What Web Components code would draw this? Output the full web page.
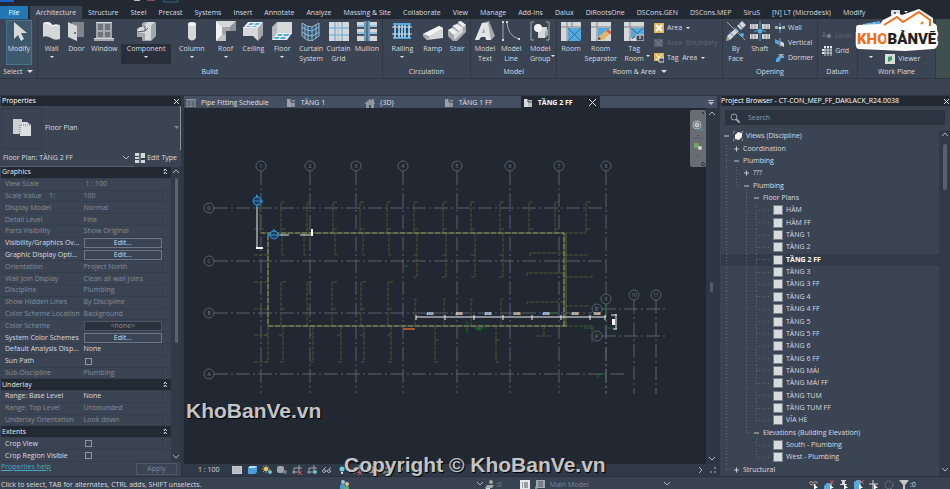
<!DOCTYPE html>
<html lang="vi">
<head>
<meta charset="utf-8">
<title>Floor Plan: TẦNG 2 FF</title>
<style>
  html, body {
    margin: 0;
    height: 100%;
    overflow: hidden;
    background: #3b4453;
  }
  body {
    --panel: #3b4453;
    --dark: #222933;
    --canvas: #212832;
    --line: #2d3542;
    --text: #d9dce1;
    --dim: #868d98;
    font: 7px/10px "Open Sans", "Noto Sans", sans-serif;
    color: var(--text);
  }
</style>
</head>
<body>

<cad-app>
  <ribbon-tabs slot="tabs"></ribbon-tabs>

  <ribbon-bar slot="ribbon">
    <ribbon-panel label="Select" more style="flex-grow: 37; --cols: 1fr">
      <ribbon-tool icon="modify" label="Modify" active></ribbon-tool>
    </ribbon-panel>
    <ribbon-panel label="Build" style="flex-grow: 347; --cols: 26fr 24fr 32fr 52fr 40fr 28fr 28fr 30fr 28fr 27fr 30fr">
      <ribbon-tool icon="wall" label="Wall" split></ribbon-tool>
      <ribbon-tool icon="door" label="Door"></ribbon-tool>
      <ribbon-tool icon="window" label="Window"></ribbon-tool>
      <ribbon-tool icon="component" label="Component" split hover></ribbon-tool>
      <ribbon-tool icon="column" label="Column" split></ribbon-tool>
      <ribbon-tool icon="roof" label="Roof" split></ribbon-tool>
      <ribbon-tool icon="ceiling" label="Ceiling"></ribbon-tool>
      <ribbon-tool icon="floor" label="Floor" split></ribbon-tool>
      <ribbon-tool icon="curtain" label="Curtain System"></ribbon-tool>
      <ribbon-tool icon="grid" label="Curtain Grid"></ribbon-tool>
      <ribbon-tool icon="mullion" label="Mullion"></ribbon-tool>
    </ribbon-panel>
    <ribbon-panel label="Circulation" style="flex-grow: 88; --cols: 38fr 24fr 26fr">
      <ribbon-tool icon="railing" label="Railing" split></ribbon-tool>
      <ribbon-tool icon="ramp" label="Ramp"></ribbon-tool>
      <ribbon-tool icon="stair" label="Stair"></ribbon-tool>
    </ribbon-panel>
    <ribbon-panel label="Model" style="flex-grow: 86; --cols: 26fr 26fr 32fr">
      <ribbon-tool icon="text" label="Model Text"></ribbon-tool>
      <ribbon-tool icon="mline" label="Model Line"></ribbon-tool>
      <ribbon-tool icon="group" label="Model Group" side></ribbon-tool>
    </ribbon-panel>
    <ribbon-panel label="Room &amp; Area" more style="flex-grow: 166; --cols: 26fr 34fr 34fr 72fr">
      <ribbon-tool icon="room" label="Room"></ribbon-tool>
      <ribbon-tool icon="separator" label="Room Separator"></ribbon-tool>
      <ribbon-tool icon="tagroom" label="Tag Room" side></ribbon-tool>
      <ribbon-stack>
        <ribbon-row icon="area" label="Area" split></ribbon-row>
        <ribbon-row icon="boundary" label="Area  Boundary" off></ribbon-row>
        <ribbon-row icon="tagarea" label="Tag  Area" split></ribbon-row>
      </ribbon-stack>
    </ribbon-panel>
    <ribbon-panel label="Opening" style="flex-grow: 95; --cols: 24fr 25fr 46fr">
      <ribbon-tool icon="byface" label="By Face"></ribbon-tool>
      <ribbon-tool icon="shaft" label="Shaft"></ribbon-tool>
      <ribbon-stack>
        <ribbon-row icon="owall" label="Wall"></ribbon-row>
        <ribbon-row icon="vertical" label="Vertical"></ribbon-row>
        <ribbon-row icon="dormer" label="Dormer"></ribbon-row>
      </ribbon-stack>
    </ribbon-panel>
    <ribbon-panel label="Datum" style="flex-grow: 39; --cols: 1fr">
      <ribbon-stack>
        <ribbon-row icon="level" label="Level" off></ribbon-row>
        <ribbon-row icon="dgrid" label="Grid"></ribbon-row>
      </ribbon-stack>
    </ribbon-panel>
    <ribbon-panel label="Work Plane" style="flex-grow: 78; --cols: 24fr 54fr">
      <ribbon-tool icon="set" label="" split></ribbon-tool>
      <ribbon-stack end>
        <ribbon-row icon="viewer" label="Viewer"></ribbon-row>
      </ribbon-stack>
    </ribbon-panel>
  </ribbon-bar>

  <properties-palette slot="left"></properties-palette>

  <view-area slot="center">
    <view-tab icon="schedule">Pipe Fitting Schedule</view-tab>
    <view-tab icon="plan">TẦNG 1</view-tab>
    <view-tab icon="house">{3D}</view-tab>
    <view-tab icon="plan">TẦNG 1 FF</view-tab>
    <view-tab icon="plan" active>TẦNG 2 FF</view-tab>
    <floor-plan slot="canvas"></floor-plan>
  </view-area>

  <project-browser slot="right"></project-browser>
  <status-bar slot="status"></status-bar>
  <brand-logo slot="overlay"></brand-logo>
</cad-app>

<script>
const W = '#d5d7d9', G = '#a4a8ad', B = '#57a9dc';

// Ribbon icons, drawn on a 20 x 20 grid
const ICONS = {
  modify: `<path d="M5 1v17l4-4 3 6 3-2-3-6h6z" fill="#d9dadb"/>`,
  wall: `<path d="M1 2q7-3 9 2 4-1 8 0v14q-5 2-9-1-5-3-8-1z" fill="${W}"/><path d="M1 2q7-3 9 2 4-1 8 0-6 2-9 1Q4 2 1 2z" fill="#f2f2f2"/>`,
  door: `<path d="M6 1h12v15H6z" fill="#80858c"/><path d="M2 1l9 4v15l-9-4z" fill="${W}"/><circle cx="9" cy="12" r="1" fill="#555"/>`,
  window: `<path d="M2 1h16v16H2zM0 17h20v3H0z" fill="${G}"/><path d="M4 3h5v6H4zM11 3h5v6h-5zM4 11h5v5H4zM11 11h5v5h-5z" fill="#6e747d"/><path d="M2 1h16v1H2zM0 17h20v1H0z" fill="${W}"/>`,
  component: `<path d="M1 9q0-3 5-3V3q0-2 4-2h8q2 0 2 2v12l-5 5H7q-1 0-1-2v-2H1z" fill="${G}"/><path d="M1 9l3-3h5V3l3-2h7l-4 4v14H9v-7H1z" fill="${W}"/><path d="M9 5v5l-8 1M9 10l3-3" stroke="#555c66" fill="none"/>`,
  column: `<path d="M6 3v14q4 5 8 0V3z" fill="${W}"/><ellipse cx="10" cy="3" rx="4" ry="2" fill="#f2f2f2"/>`,
  roof: `<path d="M0 0h20v10H10v10H0z" fill="${G}"/><path d="M0 0l6 6v8l-6 6z" fill="#f1f1f1"/><path d="M0 0h20l-6 6H6z" fill="${W}"/><path d="M14 6l6-6v10h-6z" fill="#8d9299"/><path d="M0 20l6-6h4v6z" fill="#c1c3c6"/>`,
  ceiling: `<path d="M0 6h15v14l-5-5H0z" fill="${W}"/><path d="M15 6l5-5v13l-5 6z" fill="${G}"/><path d="M5 1h15l-5 6H0z" fill="#f1f1f1"/><path d="M7 2h4L9 4H5zM13 2h4l-2 2h-4zM4 5h4L7 6H3zM10 5h4l-1 1H9z" fill="${B}"/>`,
  floor: `<path d="M5 1h15v12H5z" fill="${W}"/><path d="M0 6l5-5v12l-5 6z" fill="#b5b8bc"/><path d="M5 12h15l-5 7H0z" fill="#e9f2f8"/><path d="M6 13h5l-2 2H5zM12 13h6l-2 2h-5zM3 16h5l-2 2H2zM9 16h5l-1 2H8z" fill="${B}"/>`,
  curtain: `<path d="M1 2q5 4 10 4l7-4v13l-7 5q-6 0-10-5z" fill="#3c5468" stroke="#9fb8ca"/><path d="M4 4v14M7 5v14M11 6v14M15 4v13M1 6q5 4 10 4l7-4M1 11q5 4 10 4l7-4" fill="none" stroke="#86bbe0"/>`,
  grid: `<path d="M0 1h20v19H0z" fill="${W}"/><path d="M6 1v19M13 1v19M0 7h20M0 14h20" stroke="${B}"/><path d="M9 1v19" stroke="#b7bcc2"/>`,
  mullion: `<path d="M0 1h20v19H0z" fill="${W}"/><path d="M0 7h20M0 14h20" stroke="#4b5562" stroke-width="2"/><path d="M0 5h20M0 12h20" stroke="${B}"/><path d="M7 0h6v20H7z" fill="#52718b"/><path d="M8 0v20M12 0v20" stroke="#8cc3ea"/>`,
  railing: `<path d="M1 2h18v2H1zM1 16h18v2H1z" fill="${B}"/><path d="M3 4v13M7 4v13M10 4v13M13 4v13M17 4v13" stroke="#86c2ea" stroke-width="2"/><path d="M0 6h20M0 13h20" stroke="#d5e6f2"/>`,
  ramp: `<path d="M0 13L16 5l4 2v10l-16 2-4-4z" fill="${W}"/><path d="M0 13L16 5l4 2-14 8z" fill="#f4f4f4"/><path d="M0 13l6 2v4l-6-4z" fill="${G}"/>`,
  stair: `<path d="M1 9l4-2 1-3 4-1 2-3 7 4v7l-9 9H6l-5-5z" fill="${G}"/><path d="M1 9l4-2 6 4-4 3zM6 5l4-2 6 4-4 3zM11 1l3-1 5 4-3 2z" fill="#f1f1f1"/><path d="M7 14l4-3 1-1 4-3v4l-9 8z" fill="${W}"/>`,
  text: `<path d="M7 2l7-2 6 15-4 4h-5l-1-3H6l-2 3H0z" fill="${G}"/><path d="M7 2h6l3 17h-5v-3H6l-2 3H0zM7 12h3l-1-5z" fill="#e2e3e4" fill-rule="evenodd"/>`,
  mline: `<path d="M2 2v16M6 2q1 13 12 16" fill="none" stroke="${G}"/><path d="M1 0h2v2H1zM1 18h2v2H1zM5 0h2v2H5zM17 17h2v2h-2z" fill="${W}"/>`,
  group: `<path d="M4 1H1v18h3M16 1h3v18h-3" fill="none" stroke="${G}"/><path d="M10 6h7v8l-2 2H8v-7z" fill="${W}"/><circle cx="8" cy="7" r="4" fill="#f2f2f2"/><path d="M8 11h7v6H8z" fill="${W}"/><path d="M15 11l3-3v6l-3 3z" fill="${G}"/>`,
  room: `<path d="M0 1h20v19H0z" fill="${W}"/><path d="M0 6h20M6 1v19M11 1v5" stroke="#7e858e"/><path d="M7 7h13v13H7z" fill="${B}"/><path d="M7 7l13 13M20 7L7 20" stroke="#2d6d9d"/>`,
  separator: `<path d="M0 1h20v19H0z" fill="${W}"/><path d="M0 6h20M6 1v19" stroke="#7e858e"/><path d="M7 7h13L7 18z" fill="${B}"/><path d="M7 19l1-4 8-6 4 3-8 7z" fill="#e7b464"/><path d="M15 10l2-2 4 3-2 2z" fill="#c9655a"/><path d="M7 19l1-3 2 2z" fill="#333"/>`,
  tagroom: `<path d="M0 1h20v19H0z" fill="${W}"/><path d="M0 6h20M6 1v19" stroke="#7e858e"/><path d="M7 7h13v10H7z" fill="${B}"/><path d="M7 7l10 9M19 7L8 18" stroke="#2d6d9d"/><path d="M12 14h8v6h-8z" fill="#3b4453" stroke="#e3e5e7"/><path d="M16 15v3" stroke="#fff"/>`,
  byface: `<path d="M1 15l9-8 3 3-9 9zM11 5l5-5 4 4-5 5z" fill="${W}"/><path d="M1 1l18 18" stroke="${G}"/><path d="M3 10l5 6M8 6l6 6M13 3l4 5" stroke="#4b88b4"/><circle cx="16" cy="14" r="2" fill="${B}"/><path d="M1 15l3 4-4 1z" fill="${G}"/>`,
  shaft: `<path d="M0 3h8v5H0zM12 3h8v5h-8zM0 13h8v5H0zM12 13h8v5h-8z" fill="${W}"/><path d="M2 3v5M5 3v5M15 3v5M18 3v5M2 13v5M5 13v5M15 13v5M18 13v5" stroke="#7f868f"/><path d="M10 0v20M4 10h12" stroke="${B}"/><path d="M8 8h4v4H8z" fill="${B}"/>`,
  set: `<path d="M2 3l17-3v17L2 20z" fill="${B}"/><path d="M2 8l17-2M2 14l17-2M8 2v17M13 1v17" stroke="#b9dcf2"/>`
};

// Small icons, drawn on a 10 x 10 grid
const SMALL = {
  area: `<path d="M0 0h10v10H0z" fill="#e4b45b"/><path d="M2 2l6 6M8 2L2 8" stroke="#fff" stroke-width="2"/>`,
  boundary: `<path d="M0 1h9v8H0z" fill="#5b6471"/><path d="M1 2l6 6M8 2L3 7" stroke="#7a828d"/>`,
  tagarea: `<path d="M0 0h10v8H0z" fill="#e4b45b"/><path d="M2 1l5 6M8 1L2 7" stroke="#fff"/><path d="M5 5h5v4H5z" fill="#3b4453" stroke="#e0e2e4"/>`,
  owall: `<path d="M0 3h3v3H0zM7 3h3v3H7z" fill="${G}"/><path d="M5 0v10M2 5h6" stroke="${B}"/><path d="M4 4h2v2H4z" fill="#fff"/>`,
  vertical: `<path d="M0 1l4 2v4L0 5z" fill="${B}"/><path d="M5 3l4 2v4L5 7z" fill="${W}"/><path d="M5 0v9" stroke="${G}"/>`,
  dormer: `<path d="M1 9V6l3-3h5v2H6L4 9z" fill="${B}"/><path d="M3 1h6l-3 4z" fill="${G}"/>`,
  level: `<path d="M0 5h5M2 1v4" stroke="#6b7380"/><circle cx="7" cy="5" r="2" fill="#7b838e"/>`,
  dgrid: `<path d="M3 1v9M6 1v9M9 1v9M1 4h9M1 7h9" stroke="${W}"/><path d="M2 0h2v2H2zM5 0h2v2H5zM8 0h2v2H8zM0 3h2v2H0zM0 6h2v2H0z" fill="#eee"/>`,
  viewer: `<path d="M0 0h10v10H0z" fill="#d8dcdb"/><path d="M3 3l4-1v4L3 8z" fill="#3c9a62"/>`,
  schedule: `<path d="M0 1h10v8H0z" fill="#8b919b"/><path d="M0 3h10M0 5h10M0 7h10M3 3v6M7 3v6" stroke="#535c6a"/>`,
  plan: `<path d="M1 1h4v8H1z" fill="currentColor"/><path d="M4 2h5v7H4z" fill="currentColor" opacity=".85"/><path d="M5 1v3h4" fill="none" stroke="#3b4453"/>`,
  house: `<path d="M0 5l5-4 5 4v1H9v4H6V7H4v3H1V6H0z" fill="#9298a1"/><path d="M7 1h2v3H7z" fill="#9298a1"/>`,
  edittype: `<path d="M0 0h4v3H0zM0 4h4v2H0zM0 7h4v3H0zM6 0h4v5H6zM6 7h4v3H6z" fill="${W}"/><path d="M5 0v10" stroke="#8b919b"/>`,
  leaf: `<path d="M.5.5h9v9h-9z" fill="none" stroke="#b9bcc0" stroke-dasharray="1 1"/><path d="M1 1h8v8H1z" fill="#d9dadb"/>`,
  views: `<path d="M2 0H0v3M8 0h2v3M2 10H0V7M8 10h2V7" fill="none" stroke="${G}"/><path d="M2 4l3-3 4 1v4L6 9 2 8z" fill="#f2f2f2"/>`,
  search: `<circle cx="4" cy="4" r="3" fill="none" stroke="#9aa1ac"/><path d="M6 6l4 4" stroke="#9aa1ac" stroke-width="2"/>`,
  detail: `<path d="M0 1h10v8H0z" fill="#d5d6d7"/><path d="M0 3h10M0 5h10M0 7h10M2 1v8M4 1v8M6 1v8M8 1v8" stroke="#9b9fa5" stroke-width=".5"/>`,
  cube: `<path d="M1 3l2-2h7v6L8 9H1z" fill="#4c9fda"/><path d="M1 3l2-2h7L8 3z" fill="#b6dcf6"/>`,
  sun: `<circle cx="4" cy="4" r="2" fill="#f2cf62"/><path d="M4 0v8M0 4h8M1 1l6 6M7 1L1 7" stroke="#e9c769" stroke-width=".7"/><circle cx="8" cy="7" r="2" fill="#65c3ce"/>`,
  shadow: `<rect y="1" width="7" height="7" rx="2" fill="#a1a5ab"/><circle cx="8" cy="7" r="2" fill="#737982"/>`,
  crop: `<path d="M2 9V3h8M0 7h7V0" fill="none" stroke="${G}"/><path d="M6 6l4 4M10 6l-4 4" stroke="#d2505a"/>`,
  cropon: `<path d="M2 9V3h8M0 7h7V0" fill="none" stroke="${G}"/><circle cx="8" cy="7" r="2" fill="#65c3ce"/>`,
  glasses: `<circle cx="2" cy="6" r="1.500" fill="none" stroke="${G}"/><circle cx="7" cy="6" r="1.500" fill="none" stroke="${G}"/><path d="M2 4l2-2M7 4l2-2M3 6h3" stroke="${G}"/>`,
  bulb: `<circle cx="5" cy="4" r="2.500" fill="#6ed1dc"/><path d="M4 7h2v2H4z" fill="${W}"/>`,
  people: `<circle cx="3" cy="2" r="2" fill="#9dc5e0"/><path d="M0 10V5q3-2 5 0v5z" fill="#4f98c8"/><circle cx="7" cy="4" r="2" fill="#e5c193"/><path d="M4 10V7q3-2 5 0v3z" fill="#5fae70"/>`,
  workset: `<circle cx="6" cy="2" r="2" fill="${G}"/><path d="M2 5h7l-2 3H0z" fill="${G}"/><path d="M1 8h4v2H0z" fill="${W}"/>`,
  list: `<path d="M0 0h10v10H0z" fill="#e6e7e8"/><path d="M2 3h1M2 5h1M2 7h1M4 3h4M4 5h4M4 7h4" stroke="#49525f"/>`,
  optlist: `<path d="M1 0h9v8H1z" fill="#a3a8af"/><path d="M3 2h5M3 4h5M3 6h5" stroke="#49525f"/><path d="M0 6l4 4H0z" fill="#8a9099"/>`,
  link: `<path d="M0 3q2-3 4 0 2-3 5 0M1 4q2 2 6 0" fill="none" stroke="#c9a58e"/><path d="M5 4v6l2-2h2z" fill="#fff"/>`,
  underlay: `<path d="M0 6l3-3h5v4L6 9H0z" fill="${B}"/><path d="M6 0l4 4M10 0L6 4" stroke="#d2505a"/><path d="M6 5v5l2-2h2z" fill="#fff"/>`,
  pin: `<path d="M2 0h5v1H6v3h2v1H1V4h2V1H2z" fill="${W}"/><path d="M5 4v6l2-2h2z" fill="#fff"/>`,
  face: `<path d="M0 2l3-2h4v9H0z" fill="${B}"/><path d="M6 0l4 4M10 0L6 4" stroke="#d2505a"/><path d="M5 4v6l2-2h2z" fill="#fff"/>`,
  drag: `<path d="M4 0v9M0 4h9" stroke="${W}"/><path d="M5 4v6l2-2h2z" fill="#fff"/>`,
  ring: `<circle cx="5" cy="5" r="4" fill="none" stroke="#7d848e" stroke-dasharray="2 1"/>`,
  funnel: `<path d="M0 0h10L6 5v5H4V5z" fill="#c3c6c9"/>`,
  more: `<path d="M3 1l3 3-3 3" fill="none" stroke="${G}"/>`
};

const svg = (name) => ICONS[name]
  ? `<svg class="icon" viewBox="0 0 20 20" aria-hidden="true">${ICONS[name]}</svg>`
  : `<svg class="icon small" viewBox="0 0 10 10" aria-hidden="true">${SMALL[name]}</svg>`;

const chevron = (dir) => {
  const d = { up: 'M1 5l3-3 3 3', down: 'M1 2l3 3 3-3', right: 'M3 1l3 3-3 3' }[dir];
  return `<svg class="chevron" viewBox="0 0 8 8" width="8" height="8" aria-hidden="true"><path d="${d}" fill="none" stroke="#aeb4bd"/></svg>`;
};

const RESET = `
  *, *::before, *::after { box-sizing: border-box; }
  button, input, select { font: inherit; color: inherit; background: none; border: 0; margin: 0; padding: 0; }
  .icon { display: block; width: 20px; height: 20px; flex: none; }
  .small { width: 10px; height: 10px; }
  .chevron { display: block; flex: none; }
`;

class BaseElement extends HTMLElement {
  connectedCallback() {
    if (this.shadowRoot) return;
    this.attachShadow({ mode: 'open' });
    this.shadowRoot.innerHTML = `<style>${RESET}${this.styles()}</style>${this.render()}`;
  }
  styles() { return ''; }
  render() { return '<slot></slot>'; }
}

class CadApp extends BaseElement {
  styles() {
    return `
      :host { display: flex; flex-direction: column; height: 100vh; position: relative; }
      .options { height: 18px; flex: none; border-top: 1px solid var(--line); border-bottom: 1px solid var(--line); }
      main { flex: 1; min-height: 0; display: grid; grid-template-columns: minmax(0, 181fr) minmax(0, 533fr) minmax(0, 230fr); gap: 3px; background: #2f3744; }
      ::slotted([slot="overlay"]) { position: absolute; right: 11px; top: 9px; }
    `;
  }
  render() {
    return `
      <slot name="tabs"></slot>
      <slot name="ribbon"></slot>
      <div class="options"></div>
      <main>
        <slot name="left"></slot>
        <slot name="center"></slot>
        <slot name="right"></slot>
      </main>
      <slot name="status"></slot>
      <slot name="overlay"></slot>
    `;
  }
}

class RibbonTabs extends BaseElement {
  styles() {
    return `
      :host { display: block; background: var(--dark); flex: none; }
      .quick { height: 6px; display: flex; align-items: flex-start; }
      .quick svg { display: block; }
      nav { display: flex; height: 13px; white-space: nowrap; }
      button { padding: 0 6px; line-height: 13px; }
      .file { width: 28px; background: #2277b4; color: #fff; margin-right: 2px; }
      .on { background: var(--panel); }
      .camera { margin-left: 14px; display: flex; align-items: center; gap: 4px; }
    `;
  }
  render() {
    const tabs = ['Architecture', 'Structure', 'Steel', 'Precast', 'Systems', 'Insert', 'Annotate', 'Analyze',
      'Massing & Site', 'Collaborate', 'View', 'Manage', 'Add-Ins', 'Dalux', 'DiRootsOne', 'DSCons.GEN',
      'DSCons.MEP', 'SiruS', '[N] LT (Microdesk)', 'Modify'];
    return `
      <div class="quick">
        <svg width="190" height="3" aria-hidden="true">
          <path d="M0 0h14v2H0z" fill="#1d5fc4"/><path d="M134 0h6v1h-6z" fill="#bbb"/>
          <path d="M147 0h8v1h-8z" fill="#8d4a56"/><path d="M164 0v2h14V0" fill="none" stroke="#2b6a86"/>
        </svg>
      </div>
      <nav>
        <button class="file">File</button>
        ${tabs.map((t, i) => `<button class="${i ? '' : 'on'}">${t.replace('&', '&amp;')}</button>`).join('')}
        <button class="camera" aria-label="Show">
          <svg width="9" height="6" aria-hidden="true"><rect width="9" height="6" rx="1" fill="#d9dce1"/><circle cx="4" cy="3" r="1" fill="#222933"/></svg>
          <svg width="4" height="3" aria-hidden="true"><path d="M0 0h4L2 2z" fill="#d9dce1"/></svg>
        </button>
      </nav>
    `;
  }
}

class RibbonBar extends BaseElement {
  styles() {
    return `
      :host { display: flex; height: 59px; flex: none; }
      i { flex: 14 1 0; background: #40504f; }
    `;
  }
  render() { return '<slot></slot><i></i>'; }
}

class RibbonPanel extends BaseElement {
  styles() {
    return `
      :host { display: flex; flex-direction: column; flex-shrink: 1; flex-basis: 0; min-width: 0; border-right: 1px solid #303846; }
      .tools { flex: 1; min-height: 0; display: grid; grid-template-columns: var(--cols); padding: 1px 0 0 1px; }
      .title { height: 13px; line-height: 13px; text-align: center; white-space: nowrap; }
      .title svg { margin-left: 3px; }
    `;
  }
  render() {
    const more = this.hasAttribute('more') ? '<svg width="6" height="4" aria-hidden="true"><path d="M0 0h6L3 3z" fill="#d9dce1"/></svg>' : '';
    return `<div class="tools"><slot></slot></div><div class="title">${this.getAttribute('label').replace('&', '&amp;')} ${more}</div>`;
  }
}

class RibbonTool extends BaseElement {
  styles() {
    return `
      :host { display: flex; justify-content: center; min-width: 0; }
      button { display: flex; flex-direction: column; align-items: center; width: 100%; height: 45px; border: 1px solid transparent; }
      .text { display: flex; flex-direction: column; align-items: center; width: 100%; height: 20px; margin-top: 3px; position: relative; }
      span { white-space: nowrap; display: block; text-align: center; min-height: 10px; }
      .drop { margin-top: 2px; display: block; }
      .side { position: absolute; right: 0; top: 11px; }
      :host([active]) button { width: 26px; background: #3e596c; border-color: #477590; }
      :host([hover]) .text { background: #29303b; }
    `;
  }
  render() {
    const words = this.getAttribute('label').split(' ').join('<br>');
    const arrow = (cls) => `<svg class="${cls}" width="4" height="3" aria-hidden="true"><path d="M0 0h4L2 2z" fill="#e5e7ea"/></svg>`;
    return `
      <button aria-label="${this.getAttribute('label') || this.getAttribute('icon')}">
        ${svg(this.getAttribute('icon'))}
        <div class="text">
          <span>${words}</span>
          ${this.hasAttribute('split') ? arrow('drop') : ''}
          ${this.hasAttribute('side') ? arrow('side') : ''}
        </div>
      </button>
    `;
  }
}

class RibbonStack extends BaseElement {
  styles() {
    return `
      :host { display: flex; flex-direction: column; justify-content: center; min-width: 0; height: 46px; padding-left: 3px; }
      :host([end]) { justify-content: flex-end; }
    `;
  }
}

class RibbonRow extends BaseElement {
  styles() {
    return `
      :host { display: block; height: 15px; }
      button { display: flex; align-items: center; gap: 3px; height: 15px; white-space: pre; }
      .arrow { margin-left: 1px; }
      :host([off]) { color: #5e6774; }
    `;
  }
  render() {
    const arrow = this.hasAttribute('split') ? '<svg class="arrow" width="4" height="3" aria-hidden="true"><path d="M0 0h4L2 2z" fill="#e5e7ea"/></svg>' : '';
    return `<button ${this.hasAttribute('off') ? 'disabled' : ''}>${svg(this.getAttribute('icon'))}<span>${this.getAttribute('label')}</span>${arrow}</button>`;
  }
}

class PropertiesPalette extends BaseElement {
  styles() {
    return `
      :host { display: flex; flex-direction: column; min-width: 0; min-height: 0; background: var(--panel); padding-left: 1px; }
      header { display: flex; justify-content: space-between; align-items: center; height: 10px; background: var(--dark); padding: 0 1px; color: #fff; }
      .type { display: flex; align-items: center; gap: 3px; height: 44px; flex: none; border-right: 1px solid #8b929c; }
      .thumb { width: 41px; height: 41px; border: 1px solid #343c49; display: grid; place-items: center; }
      select { appearance: none; flex: 1; min-width: 0; }
      .instance { display: flex; align-items: center; height: 16px; flex: none; padding: 0 4px 0 2px; }
      .instance .chevron { margin: 0 5px 0 0; }
      .instance button { display: flex; align-items: center; gap: 2px; }
      .thumbline { width: 133px; height: 1px; background: #596271; }
      .body { display: flex; flex: 1; min-height: 0; }
      table { border-collapse: collapse; table-layout: fixed; flex: 1; height: 100%; width: 0; }
      td, th { padding: 0 0 0 4px; font-weight: normal; text-align: left; white-space: nowrap; border-bottom: 1px solid #353e4c; color: var(--dim); line-height: 10px; }
      td { padding: 0 0 0 1px; }
      td + td { border-left: 1px solid #353e4c; }
      tr.live th, tr.live td { color: var(--text); }
      tr.group th { background: var(--dark); color: #e6e8eb; padding-left: 1px; }
      tr.group svg { float: right; margin: 1px 3px 0 0; }
      .edit { display: block; width: 100%; height: 10px; line-height: 8px; border: 1px solid #6f7986; text-align: center; }
      .none { background: #2b313d; border-color: #4d5664; }
      input[type="checkbox"] { appearance: none; display: block; width: 7px; height: 7px; border: 1px solid #9097a1; margin: 1px; }
      pre { margin: 0; font: inherit; }
      .scroll { width: 10px; background: #323a47; display: flex; flex-direction: column; align-items: center; justify-content: space-between; padding: 1px 0; }
      .scroll i { width: 3px; flex: 1; margin: 2px 0 110px; background: #596372; border-radius: 2px; }
      footer { display: flex; justify-content: space-between; height: 14px; flex: none; padding: 0 4px 0 0; }
      footer a { color: #4aa6c9; height: 10px; }
      footer button { width: 41px; height: 12px; line-height: 10px; border: 1px solid #4e5866; color: #828994; align-self: flex-end; margin-bottom: 1px; }
    `;
  }
  render() {
    const rows = [
      ['# Graphics'],
      ['View Scale', ' 1 : 100'], ['Scale Value    1:', '100'], ['Display Model', 'Normal'],
      ['Detail Level', 'Fine'], ['Parts Visibility', 'Show Original'],
      ['Visibility/Graphics Ov...', 'edit', 1], ['Graphic Display Opti...', 'edit', 1],
      ['Orientation', 'Project North'], ['Wall Join Display', 'Clean all wall joins'],
      ['Discipline', 'Plumbing'], ['Show Hidden Lines', 'By Discipline'],
      ['Color Scheme Location', 'Background'], ['Color Scheme', 'none'],
      ['System Color Schemes', 'edit', 1], ['Default Analysis Disp...', 'None', 1],
      ['Sun Path', 'check', 1], ['Sub-Discipline', 'Plumbing'],
      ['# Underlay'],
      ['Range: Base Level', 'None', 1], ['Range: Top Level', 'Unbounded'], ['Underlay Orientation', 'Look down'],
      ['# Extents'],
      ['Crop View', 'check', 1], ['Crop Region Visible', 'check', 1]
    ];
    const cell = (v, i) => {
      if (v === 'edit') return `<button class="edit" aria-labelledby="p${i}">Edit...</button>`;
      if (v === 'none') return `<button class="edit none" disabled aria-labelledby="p${i}">&lt;none&gt;</button>`;
      if (v === 'check') return `<input type="checkbox" id="c${i}">`;
      return `<pre>${v}</pre>`;
    };
    const body = rows.map(([name, value, live], i) => {
      if (name[0] === '#') {
        return `<tr class="group"><th colspan="3">${name.slice(2)}<svg width="5" height="7" aria-hidden="true"><path d="M1 3l1-2 2 2M1 6l1-2 2 2" fill="none" stroke="#d9dce1"/></svg></th></tr>`;
      }
      const label = value === 'check' ? `<label for="c${i}">${name}</label>` : name.replace(/ /g, name.includes('1:') ? '&nbsp;' : ' ');
      return `<tr class="${live ? 'live' : ''}"><th scope="row" id="p${i}">${label}</th><td>${cell(value, i)}</td><td></td></tr>`;
    }).join('');
    return `
      <header><span>Properties</span><svg width="7" height="7" aria-hidden="true"><path d="M1 1l5 5M6 1L1 6" stroke="#d9dce1"/></svg></header>
      <div class="type">
        <div class="thumb"><svg width="20" height="20" aria-hidden="true"><path d="M1 1h9v15H1z" fill="#cdcfd1"/><path d="M10 4h5l4 3v11H8V8z" fill="#dddedf"/><path d="M8 16V7h10" fill="none" stroke="#6c737d" stroke-dasharray="1 1"/></svg></div>
        <select aria-label="Type"><option>Floor Plan</option></select>
        <svg width="6" height="4" aria-hidden="true"><path d="M0 0h5L3 3z" fill="#7e8692"/></svg>
      </div>
      <div class="instance">
        <select aria-label="Instance"><option>Floor Plan: TẦNG 2 FF</option></select>
        ${chevron('down')}
        <button>${svg('edittype')}Edit Type</button>
      </div>
      <div class="thumbline"></div>
      <div class="body">
        <table>
          <colgroup><col style="width: 48%"><col style="width: 47%"><col style="width: 5%"></colgroup>
          <tbody>${body}</tbody>
        </table>
        <div class="scroll">${chevron('up')}<i></i>${chevron('down')}</div>
      </div>
      <footer><a href="#help">Properties help</a><button disabled>Apply</button></footer>
    `;
  }
}

class ViewTab extends BaseElement {
  styles() {
    return `
      :host { display: block; min-width: 79px; flex: none; }
      button { display: flex; align-items: center; gap: 5px; width: 100%; height: 13px; padding: 0 15px 0 2px; white-space: nowrap; color: #dfe2e6; }
      .icon { color: #9ba1aa; }
      :host([active]) { background: var(--canvas); font-weight: bold; }
      :host([active]) button { padding-right: 4px; color: #fff; }
      :host([active]) .icon { color: #d9dadb; }
      .close { margin-left: auto; }
    `;
  }
  render() {
    const close = this.hasAttribute('active') ? '<svg class="close" width="7" height="7" aria-hidden="true"><path d="M0 0l7 7M7 0L0 7" stroke="#e1e3e6"/></svg>' : '';
    return `<button>${svg(this.getAttribute('icon'))}<span><slot></slot></span>${close}</button>`;
  }
}

class ViewArea extends BaseElement {
  styles() {
    return `
      :host { display: flex; flex-direction: column; min-width: 0; min-height: 0; position: relative; }
      .tabs { display: flex; height: 12px; flex: none; background: #454f62; }
      .list { margin-left: auto; width: 12px; display: grid; place-items: center; }
      .view { flex: 1; min-height: 0; display: flex; background: var(--canvas); }
      ::slotted([slot="canvas"]) { flex: 1; }
      .scroll { width: 11px; background: #2f3744; display: flex; flex-direction: column; align-items: center; justify-content: space-between; padding: 2px 0 1px; }
      .scroll i { width: 3px; height: 10px; background: #515c6d; border-radius: 2px; }
      .controls { display: flex; align-items: center; gap: 5px; height: 12px; flex: none; background: #303947; padding-left: 14px; }
      .scale { width: 29px; text-align: left; }
      .controls button { display: block; }
      .controls .chevron { margin: 0 0 0 auto; }
      .nav { position: absolute; right: 11px; top: 14px; width: 16px; height: 57px; border-radius: 2px; background: #686d73; }
      .mark { position: absolute; font: bold 21px/24px "Liberation Sans", sans-serif; color: #c2c4c6; text-shadow: 1px 1px 1px #000; white-space: nowrap; pointer-events: none; }
      .first { left: 2px; top: 303px; }
      .second { left: 160px; top: 357px; }
    `;
  }
  render() {
    const controls = ['detail', 'cube', 'sun', 'shadow', 'crop', 'cropon', 'glasses', 'bulb', 'crop', 'shadow', 'cropon', 'more'];
    return `
      <div class="tabs">
        <slot></slot>
        <button class="list" aria-label="Views"><svg width="6" height="5" aria-hidden="true"><path d="M0 0h6v1H0zM0 2h6L3 5z" fill="#b5bac2"/></svg></button>
      </div>
      <div class="view">
        <slot name="canvas"></slot>
        <div class="scroll">${chevron('up')}<i></i>${chevron('down')}</div>
      </div>
      <div class="controls">
        <button class="scale">1 : 100</button>
        ${controls.map((c) => `<button aria-label="${c}">${svg(c)}</button>`).join('')}
        ${chevron('right')}
        <svg width="8" height="8" aria-hidden="true"><path d="M5 1h2v2H5zM5 5h2v2H5zM1 5h2v2H1z" fill="#6d7683"/></svg>
      </div>
      <svg class="nav" viewBox="0 0 16 57" aria-hidden="true">
        <circle cx="13" cy="3" r="1" fill="#2d3440"/>
        <circle cx="7" cy="15" r="4" fill="none" stroke="#b4b8bc"/><circle cx="7" cy="15" r="2" fill="#a5a9ad" stroke="#dcdee0"/>
        <path d="M9 20h4l-2-2" fill="none" stroke="#4f8fb8"/><path d="M7 25h2l-1 1z" fill="#2d3440"/>
        <path d="M2 28h12" stroke="#595f67"/>
        <path d="M4 33h5v5H4z" fill="#74a060"/><circle cx="10" cy="38" r="2" fill="#cfd2cf"/>
        <path d="M7 46h2l-1 1z" fill="#2d3440"/><circle cx="13" cy="54" r="1.500" fill="none" stroke="#2d3440"/>
      </svg>
      <div class="mark first">KhoBanVe.vn</div>
      <div class="mark second">Copyright © KhoBanVe.vn</div>
    `;
  }
}

class FloorPlan extends BaseElement {
  styles() {
    return `
      :host { display: block; min-width: 0; min-height: 0; overflow: hidden; }
      svg { display: block; width: 100%; height: 100%; }
      .axis { stroke: #59606a; stroke-dasharray: 14 3 2 3; fill: none; }
      .bubble { stroke: #59606a; fill: #212832; }
      .name { fill: #7a818b; font-size: 5px; text-anchor: middle; }
      .pipe { stroke: #46562f; stroke-dasharray: 4 1; fill: none; }
      .main { stroke: #5d6a35; fill: none; }
      .glow { stroke: #8b9170; stroke-dasharray: 5 2; fill: none; }
      .fitting { stroke: #1f6b2c; fill: none; }
      .dim { stroke: #f0f1f2; fill: none; }
      .num { fill: #fff; font-size: 3px; font-weight: bold; text-anchor: middle; }
    `;
  }
  render() {
    const cols = [[261, 1], [310, 2], [356, 3], [403, 4], [457, 5], [510, 6], [559, 7], [606, 8]];
    const rows = [[208, 'D', 606], [261, 'C', 606], [313, 'B', 592], [374, 'A', 627]];
    const line = (cls, d) => `<path class="${cls}" d="${d}"/>`;
    const bubble = (x, y, n) => `<circle class="bubble" cx="${x}" cy="${y}" r="5"/><text class="name" x="${x}" y="${y + 2}">${n}</text>`;

    // Grid axes
    const axes = cols.map(([x]) => `M${x} 171V393`).join('')
      + rows.map(([y, , end]) => `M214 ${y}H${end}`).join('')
      + 'M634 300V394M656 300V394M606 303V394M602 309H665M602 336H665';

    // Branch pipes on both sides of the ring main
    const above = [260, 281, 307, 333, 360, 387, 414, 443, 471, 500, 529, 555, 586].map((x) => `M${x + 4} 202H${x}V233M${x} 229h4`).join('');
    const below = [282, 304, 335, 363, 389].map((x) => `M${x} 233V255h2`).join('')
      + [417, 446, 475, 503].map((x) => `M${x} 233V277h-4M${x} 255h-4`).join('');
    const inner = [281, 307, 332, 361, 388].map((x) => `M${x + 5} 282H${x}V326M${x} 309h4`).join('')
      + [415, 444, 471, 501].map((x) => `M${x + 2} 299H${x}V326`).join('');
    const outer = [268, 283, 313, 341, 364, 391].map((x) => `M${x} 326V362h-4M${x} 335h-4`).join('')
      + [435, 496].map((x) => `M${x} 326V362h4M${x} 340h4`).join('');
    const sides = 'M254 255h14M254 282h14M254 309h14M254 335h14M254 362h14M254 229h8'
      + 'M530 256v-3h34M564 255h25M527 276v-3h37M564 277h28v-3M527 304v-2h37M564 306h26M544 326v10M536 336h16M564 326h28v17M564 233h22';

    const stops = [416, 445, 474, 503, 532, 561, 590, 605];
    const dims = 'M416 317H606' + stops.map((x) => `M${x} 315v5`).join('') + 'M616 314v15M611 315h6M613 329h4';
    const nums = stops.slice(0, -1).map((x, i) => `<text class="num" x="${(x + stops[i + 1]) >> 1}" y="315">${i < 6 ? 4500 : 2500}</text>`).join('');

    const section = (x, y, turn) => `
      <g transform="translate(${x} ${y}) rotate(${turn})">
        <path d="M-1-7L6 0-1 7z" fill="#2f8bd0"/>
        <circle r="4" fill="#1e3f5c" stroke="#2f8bd0"/>
      </g><path d="M${x - 4} ${y}h8" stroke="#2f8bd0"/>`;

    return `
      <svg viewBox="184 108 522 357" preserveAspectRatio="xMinYMin slice" role="img" aria-label="TẦNG 2 FF">
        ${line('axis', axes)}
        ${line('pipe', above + below + inner + outer + sides)}
        ${line('main', 'M260 233H564V326H268V233')}
        ${line('main', 'M566 234V326')}
        ${line('glow', 'M268 235V326H568M564 326V233H262')}
        ${line('fitting', 'M404 266h4M467 321v12M475 328h10M478 326v5M480 327v4M584 328h10M598 309h8M606 302v16M604 328h10M598 378v-4h8M550 313h8M476 329h5')}
        ${cols.map(([x, n]) => bubble(x, 166, n)).join('')}
        ${rows.map(([y, n]) => bubble(209, y, n)).join('')}
        ${bubble(606, 299, 9)}${bubble(634, 295, 10)}${bubble(656, 295, 11)}${bubble(597, 309, 'B\'')}${bubble(597, 336, 'A\'')}
        <path d="M403 328h12v2h-12z" fill="#a9532f"/>
        ${line('dim', dims)}${nums}
        <path d="M612 319h3v6h-3z" fill="#fff"/>
        <path d="M257 207V247M280 235h9M300 235h12" stroke="#e6e8ea"/>
        <path d="M256 248h7M312 229v7" stroke="#fff" stroke-width="2"/>
        ${section(257, 201, 0)}${section(274, 235, -90)}
      </svg>
    `;
  }
}

class ProjectBrowser extends BaseElement {
  styles() {
    return `
      :host { display: flex; flex-direction: column; min-width: 0; min-height: 0; background: var(--panel); padding-left: 1px; }
      header { display: flex; justify-content: space-between; align-items: center; height: 10px; background: var(--dark); color: #fff; flex: none; white-space: nowrap; }
      .find { display: flex; align-items: center; gap: 5px; height: 15px; flex: none; margin: 4px 5px 5px 4px; padding: 0 5px; background: #2c3440; }
      input { flex: 1; min-width: 0; outline: 0; }
      input::placeholder { color: #979eaa; opacity: 1; }
      .body { flex: 1; min-height: 0; display: flex; }
      ul { flex: 1; min-width: 0; margin: 0; padding: 0; list-style: none; display: grid; grid-auto-rows: minmax(0, 1fr); }
      li { display: flex; align-items: center; padding-left: 1px; white-space: nowrap; }
      li.on { background: #333b48; color: #fff; font-weight: bold; }
      .guide { width: 10px; align-self: stretch; padding-left: 4px; flex: none; display: flex; }
      .guide.through { background: repeating-linear-gradient(#5d6673 0 1px, transparent 1px 3px) 4px 0 / 1px 100% no-repeat; }
      .guide.last { background: repeating-linear-gradient(#5d6673 0 1px, transparent 1px 3px) 4px 0 / 1px 50% no-repeat; }
      .stub { flex: 1; align-self: center; height: 1px; background: repeating-linear-gradient(90deg, #5d6673 0 1px, transparent 1px 3px); }
      .toggle { width: 8px; height: 8px; flex: none; margin-right: 3px; }
      .toggle svg { display: block; }
      .lead { width: 8px; height: 1px; margin-right: 3px; background: repeating-linear-gradient(90deg, #5d6673 0 1px, transparent 1px 3px); }
      .icon { margin-right: 3px; }
      .scroll { width: 11px; background: #323a47; display: flex; flex-direction: column; align-items: center; justify-content: space-between; padding: 1px 0 2px; }
      .scroll i { width: 4px; height: 46px; margin: 5px 0 auto; background: #566070; border-radius: 2px; }
    `;
  }
  render() {
    const leaves = ['HẦM', 'HẦM FF', 'TẦNG 1', 'TẦNG 2', 'TẦNG 2 FF', 'TẦNG 3', 'TẦNG 3 FF', 'TẦNG 4', 'TẦNG 4 FF',
      'TẦNG 5', 'TẦNG 5 FF', 'TẦNG 6', 'TẦNG 6 FF', 'TẦNG MÁI', 'TẦNG MÁI FF', 'TẦNG TUM', 'TẦNG TUM FF', 'VĨA HÈ'];
    const rows = [
      [0, '-', 'Views (Discipline)'], [1, '+', 'Coordination'], [1, '-', 'Plumbing'], [2, '+', '???'],
      [2, '-', 'Plumbing'], [3, '-', 'Floor Plans'], ...leaves.map((t) => [4, '', t]),
      [3, '-', 'Elevations (Building Elevation)'], [4, '', 'South - Plumbing'], [4, '', 'West - Plumbing'],
      [1, '+', 'Structural']
    ];
    // True when a row at this level follows before the branch closes
    const continues = (from, level) => {
      for (let i = from + 1; i < rows.length; i++) {
        if (rows[i][0] === level) return true;
        if (rows[i][0] < level) return false;
      }
      return false;
    };
    const items = rows.map(([level, mark, text], i) => {
      let guides = '';
      for (let k = 1; k <= level; k++) {
        const kind = continues(i, k) ? 'through' : k === level ? 'last' : '';
        guides += `<span class="guide ${kind}">${k === level ? '<span class="stub"></span>' : ''}</span>`;
      }
      const toggle = mark
        ? `<button class="toggle" aria-label="${text}"><svg width="8" height="8" aria-hidden="true"><path d="M2 4h5${mark === '+' ? 'M4.500 1.500v5' : ''}" stroke="#c3c7cd"/></svg></button>`
        : '<span class="lead"></span>';
      const icon = level === 0 ? svg('views') : mark ? '' : svg('leaf');
      return `<li role="treeitem" class="${text === 'TẦNG 2 FF' ? 'on' : ''}">${guides}${toggle}${icon}<span>${text}</span></li>`;
    }).join('');
    return `
      <header><span>Project Browser - CT-CON_MEP_FF_DAKLACK_R24.0038</span><svg width="7" height="7" aria-hidden="true"><path d="M1 1l5 5M6 1L1 6" stroke="#d9dce1"/></svg></header>
      <label class="find">${svg('search')}<input type="search" placeholder="Search" aria-label="Search"></label>
      <div class="body">
        <ul role="tree">${items}</ul>
        <div class="scroll">${chevron('up')}<i></i>${chevron('down')}</div>
      </div>
    `;
  }
}

class StatusBar extends BaseElement {
  styles() {
    return `
      :host { display: grid; grid-template-columns: 339fr 145fr 324fr 142fr; height: 12px; flex: none; background: #394250; border-top: 1px solid #2a313c; overflow: hidden; }
      div { display: flex; align-items: flex-start; gap: 5px; min-width: 0; white-space: nowrap; line-height: 9px; padding: 3px 0 0 1px; }
      .chevron { margin-left: auto; }
      .model { color: #7f8793; }
      .model .chevron { margin: 0 0 0 70px; }
      .count { margin-left: -4px; }
      .gap { width: 8px; }
    `;
  }
  render() {
    return `
      <div><span>Click to select, TAB for alternates, CTRL adds, SHIFT unselects.</span></div>
      <div>${svg('people')}${chevron('down')}</div>
      <div class="model">${svg('workset')}<span class="count">:0</span><span class="gap"></span>${svg('list')}${svg('optlist')}<span>Main Model</span>${chevron('down')}</div>
      <div>${['link', 'underlay', 'pin', 'face', 'drag', 'ring', 'funnel'].map(svg).join('')}<span class="count">:0</span></div>
    `;
  }
}

class BrandLogo extends BaseElement {
  styles() {
    return `
      :host { display: block; width: 84px; height: 42px; pointer-events: none; }
      svg { display: block; width: 100%; height: 100%; overflow: visible; }
      text { font: 900 15px Roboto, "Liberation Sans", sans-serif; fill: #222; stroke: #fff; stroke-width: 4px; stroke-linejoin: round; paint-order: stroke; }
      tspan { fill: #f0711c; }
    `;
  }
  render() {
    return `
      <svg viewBox="0 0 84 42" role="img" aria-label="KhoBanVe">
        <path d="M3 16l22-1 3-4 14-7 5 2L64 0l14 9v5q4 1 4 4v18q0 4-4 4l-28 2-46-2q-3 0-3-4V20q0-4 2-4z" fill="#fff"/>
        <path d="M29 16l13-8 6 5 16-10 11 8v6M66 15l2-2" fill="none" stroke="#f0711c" stroke-width="2"/>
        <text x="2" y="35"><tspan>KHO</tspan>BẢNVẼ</text>
      </svg>
    `;
  }
}

customElements.define('cad-app', CadApp);
customElements.define('ribbon-tabs', RibbonTabs);
customElements.define('ribbon-bar', RibbonBar);
customElements.define('ribbon-panel', RibbonPanel);
customElements.define('ribbon-tool', RibbonTool);
customElements.define('ribbon-stack', RibbonStack);
customElements.define('ribbon-row', RibbonRow);
customElements.define('properties-palette', PropertiesPalette);
customElements.define('view-tab', ViewTab);
customElements.define('view-area', ViewArea);
customElements.define('floor-plan', FloorPlan);
customElements.define('project-browser', ProjectBrowser);
customElements.define('status-bar', StatusBar);
customElements.define('brand-logo', BrandLogo);
</script>
</body>
</html>
